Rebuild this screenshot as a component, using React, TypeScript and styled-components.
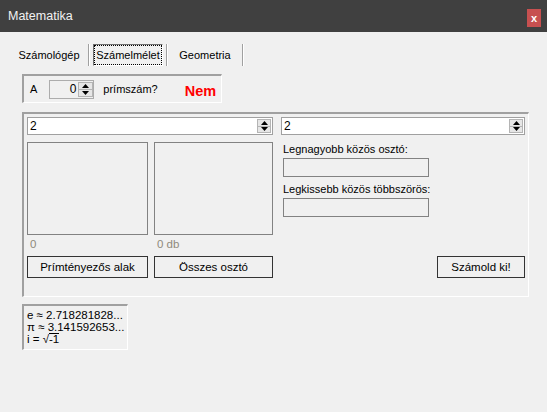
import styled, { createGlobalStyle } from "styled-components";

const GlobalStyle = createGlobalStyle`
  html, body {
    margin: 0;
    padding: 0;
    background: #f0f0f0;
  }
  body {
    font-family: "Liberation Sans", Arial, sans-serif;
    font-size: 11px;
    color: #000;
  }
  * { box-sizing: border-box; }
`;

const Window = styled.div`
  width: 547px;
  height: 412px;
  background: #f0f0f0;
  overflow: hidden;
`;

const TitleBar = styled.div`
  height: 32px;
  background: #404040;
  display: flex;
  align-items: center;
  justify-content: space-between;
  padding: 0 6px 0 8px;
`;

const Title = styled.span`
  color: #f2f2f2;
  font-size: 12.5px;
`;

const CloseBtn = styled.div`
  width: 14px;
  height: 18px;
  margin-top: 4px;
  background: #c75050;
  color: #fff;
  font-weight: bold;
  font-size: 11px;
  display: flex;
  align-items: center;
  justify-content: center;
`;

const TabBar = styled.div`
  margin-top: 12px;
  height: 22px;
  padding-left: 13px;
  display: flex;
  align-items: stretch;
`;

const Tab = styled.div<{ $w: number; $active?: boolean }>`
  width: ${(p) => p.$w}px;
  display: flex;
  align-items: center;
  justify-content: center;
  font-size: 11px;
  padding: 1px;
  border: 1px solid;
  border-color: ${(p) => (p.$active ? "#6d6d6d #ffffff #ffffff #6d6d6d" : "transparent")};
  span {
    flex: 1;
    align-self: stretch;
    display: flex;
    align-items: center;
    justify-content: center;
    outline: ${(p) => (p.$active ? "1px dotted #000" : "none")};
  }
`;

const Sep = styled.div`
  width: 2px;
  margin: 0 3px;
  border-left: 1px solid #a0a0a0;
  border-right: 1px solid #ffffff;
`;

const Content = styled.div`
  padding-left: 22px;
`;

const Sunken = styled.div`
  border-style: solid;
  border-width: 2px 1px 1px 2px;
  border-color: #a0a0a0 #ffffff #ffffff #a0a0a0;
`;

const PrimeBox = styled(Sunken)`
  margin-top: 8px;
  width: 200px;
  height: 29px;
  display: flex;
  align-items: center;
  padding-left: 6px;
  font-size: 11px;
`;

const SmallSpin = styled.div`
  width: 45px;
  height: 19px;
  margin-left: 12px;
  border: 1px solid #acacac;
  display: flex;
  align-items: stretch;
`;

const SpinValue = styled.div<{ $right?: boolean }>`
  flex: 1;
  display: flex;
  align-items: center;
  justify-content: ${(p) => (p.$right ? "flex-end" : "flex-start")};
  padding: 0 2px;
  font-size: 12px;
`;

const SpinCol = styled.div<{ $w: number }>`
  width: ${(p) => p.$w}px;
  display: flex;
  flex-direction: column;
  padding: 1px 0;
`;

const SpinHalf = styled.div`
  flex: 1;
  display: flex;
  align-items: center;
  justify-content: center;
  background: #e6e6e6;
  border: 1px solid #b4b4b4;
  & + & {
    border-top: none;
  }
`;

const PrimeText = styled.span`
  margin-left: 9px;
`;

const Nem = styled.span`
  margin-left: 27px;
  color: #ff0000;
  font-weight: bold;
  font-size: 14.5px;
  margin-top: 3px;
`;

const Panel = styled(Sunken)`
  margin-top: 9px;
  width: 507px;
  height: 185px;
  padding: 3px;
  display: grid;
  grid-template-columns: 246px 244px;
  column-gap: 8px;
  align-items: start;
`;

const Column = styled.div`
  display: flex;
  flex-direction: column;
`;

const NumInput = styled.div`
  height: 18px;
  background: #fff;
  border: 1px solid #a0a0a0;
  display: flex;
  align-items: stretch;
  padding-right: 1px;
`;

const Row = styled.div<{ $mt: number }>`
  margin-top: ${(p) => p.$mt}px;
  display: flex;
  gap: 6px;
`;

const ListBox = styled.div<{ $w: number }>`
  width: ${(p) => p.$w}px;
  height: 93px;
  border: 1px solid #828282;
  background: #f0f0f0;
`;

const Count = styled.div<{ $w: number }>`
  width: ${(p) => p.$w}px;
  height: 14px;
  line-height: 14px;
  padding-left: 3px;
  color: #8f8a7c;
  font-size: 11.5px;
`;

const Button = styled.div<{ $w: number }>`
  width: ${(p) => p.$w}px;
  height: 22px;
  border: 1px solid #333;
  background: #f0f0f0;
  display: flex;
  align-items: center;
  justify-content: center;
  font-size: 11.5px;
`;

const Label = styled.div<{ $mt: number }>`
  margin-top: ${(p) => p.$mt}px;
  margin-left: 2px;
  height: 13px;
  line-height: 13px;
  font-size: 11px;
`;

const TextBox = styled.div`
  margin-top: 2px;
  margin-left: 2px;
  width: 146px;
  height: 19px;
  border: 1px solid #828282;
  background: #f0f0f0;
`;

const RightButton = styled(Button)`
  margin-top: 39px;
  align-self: flex-end;
`;

const ConstBox = styled(Sunken)`
  margin-top: 7px;
  width: 106px;
  height: 46px;
  padding: 3px 0 0 3px;
  font-size: 11.5px;
  line-height: 12px;
`;

const Root = styled.span`
  border-top: 1px solid #000;
  line-height: 10px;
  display: inline-block;
`;

function Arrow({ up }: { up?: boolean }) {
  return (
    <svg width="7" height="4" viewBox="0 0 7 4">
      <polygon points={up ? "3.5,0 7,4 0,4" : "0,0 7,0 3.5,4"} fill="#000" />
    </svg>
  );
}

function Spinner({ w }: { w: number }) {
  return (
    <SpinCol $w={w}>
      <SpinHalf>
        <Arrow up />
      </SpinHalf>
      <SpinHalf>
        <Arrow />
      </SpinHalf>
    </SpinCol>
  );
}

export default function App() {
  return (
    <Window>
      <GlobalStyle />
      <TitleBar>
        <Title>Matematika</Title>
        <CloseBtn>x</CloseBtn>
      </TitleBar>
      <TabBar>
        <Tab $w={72}>
          <span>Számológép</span>
        </Tab>
        <Sep />
        <Tab $w={70} $active>
          <span>Számelmélet</span>
        </Tab>
        <Sep />
        <Tab $w={68}>
          <span>Geometria</span>
        </Tab>
        <Sep />
      </TabBar>
      <Content>
        <PrimeBox>
          <span>A</span>
          <SmallSpin>
            <SpinValue $right>0</SpinValue>
            <Spinner w={15} />
          </SmallSpin>
          <PrimeText>prímszám?</PrimeText>
          <Nem>Nem</Nem>
        </PrimeBox>

        <Panel>
          <Column>
            <NumInput>
              <SpinValue>2</SpinValue>
              <Spinner w={14} />
            </NumInput>
            <Row $mt={7}>
              <ListBox $w={121} />
              <ListBox $w={119} />
            </Row>
            <Row $mt={2}>
              <Count $w={121}>0</Count>
              <Count $w={119}>0 db</Count>
            </Row>
            <Row $mt={5}>
              <Button $w={121}>Prímtényezős alak</Button>
              <Button $w={119}>Összes osztó</Button>
            </Row>
          </Column>
          <Column>
            <NumInput>
              <SpinValue>2</SpinValue>
              <Spinner w={14} />
            </NumInput>
            <Label $mt={8}>Legnagyobb közös osztó:</Label>
            <TextBox />
            <Label $mt={6}>Legkissebb közös többszörös:</Label>
            <TextBox />
            <RightButton $w={88}>Számold ki!</RightButton>
          </Column>
        </Panel>

        <ConstBox>
          <div>e ≈ 2.718281828...</div>
          <div>π ≈ 3.141592653...</div>
          <div>
            i = √<Root>-1</Root>
          </div>
        </ConstBox>
      </Content>
    </Window>
  );
}
